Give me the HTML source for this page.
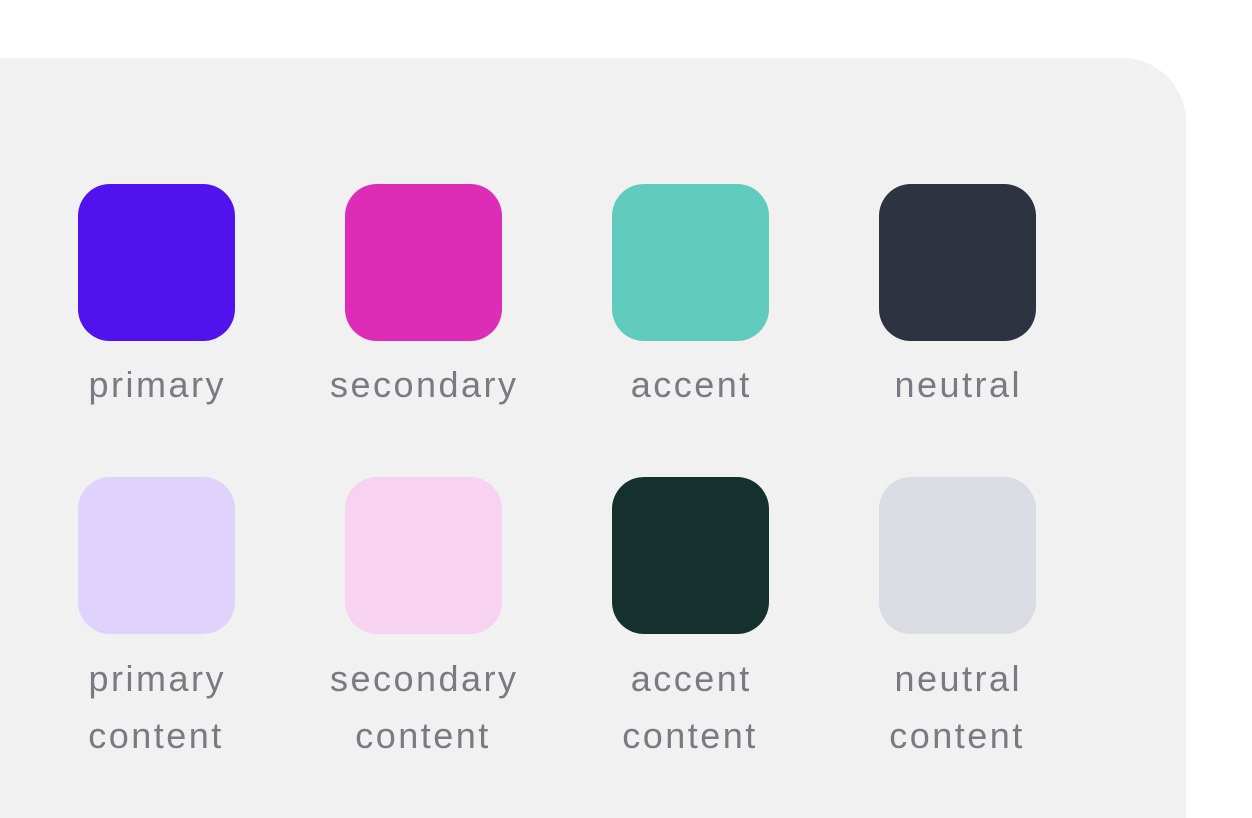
<!DOCTYPE html>
<html><head><style>
html,body{margin:0;padding:0;background:#fff;width:1252px;height:794px;overflow:hidden;font-family:"Liberation Sans","DejaVu Sans",sans-serif;}
.panel{position:absolute;left:0;top:58px;width:1186px;height:760px;background:#f1f1f1;border-top-right-radius:64px;}
.sw{position:absolute;width:157px;height:157px;border-radius:32px;}
.lb{position:absolute;width:260px;text-align:center;font-size:36px;line-height:57px;color:#797a82;letter-spacing:2.5px;text-indent:2.5px;}
</style></head><body>
<div class="panel"></div>
<div class="sw" style="left:78px;top:184px;background:#5212ee"></div>
<div class="sw" style="left:345px;top:184px;background:#dd2db6"></div>
<div class="sw" style="left:612px;top:184px;background:#61cbbd"></div>
<div class="sw" style="left:879px;top:184px;background:#2d3340"></div>
<div class="sw" style="left:78px;top:477px;background:#dfd3fb"></div>
<div class="sw" style="left:345px;top:477px;background:#f7d3f1"></div>
<div class="sw" style="left:612px;top:477px;background:#16302d"></div>
<div class="sw" style="left:879px;top:477px;background:#d9dce3"></div>
<div class="lb" style="left:26px;top:356px">primary</div>
<div class="lb" style="left:293px;top:356px">secondary</div>
<div class="lb" style="left:560px;top:356px">accent</div>
<div class="lb" style="left:827px;top:356px">neutral</div>
<div class="lb" style="left:26px;top:650px">primary<br>content</div>
<div class="lb" style="left:293px;top:650px">secondary<br>content</div>
<div class="lb" style="left:560px;top:650px">accent<br>content</div>
<div class="lb" style="left:827px;top:650px">neutral<br>content</div>
</body></html>
